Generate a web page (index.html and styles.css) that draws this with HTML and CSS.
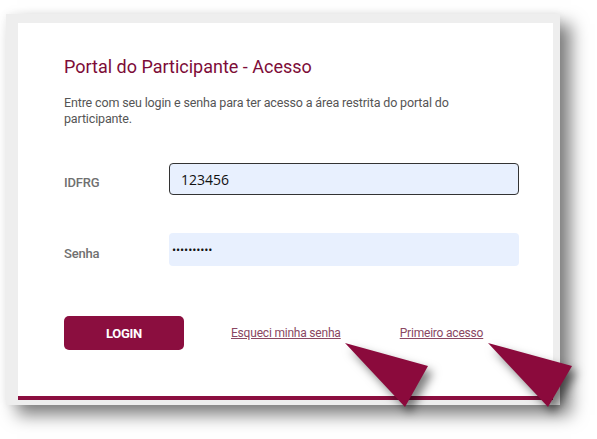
FILE: index.html
```html
<!DOCTYPE html>
<html>
<head lang="pt-BR">
    <meta charset="UTF-8">
    <title>Portal do Participante - Acesso</title>
    <link rel="stylesheet" href="styles.css">
</head>
<body>
<div id="frame">
    <div id="panel">
        <h1 class="title">Portal do Participante - Acesso</h1>
        <p class="intro">Entre com seu login e senha para ter acesso a área restrita do portal do participante.</p>
        <form class="login-form">
            <div class="row">
                <label class="label" for="idfrg">IDFRG</label>
                <input class="field focused" id="idfrg" type="text" value="123456">
            </div>
            <div class="row">
                <label class="label" for="senha">Senha</label>
                <input class="field secret" id="senha" type="password" value="1234567890">
            </div>
            <div class="actions">
                <button class="btn" type="button">LOGIN</button>
                <a class="link link-forgot" href="#">Esqueci minha senha</a>
                <a class="link" href="#">Primeiro acesso</a>
            </div>
        </form>
    </div>
</div>
<svg class="pointers" width="597" height="439" viewBox="0 0 597 439">
    <polygon points="345,343 428,366 405,407"/>
    <polygon points="488,343 572,366 548,407"/>
</svg>
</body>
</html>
```

FILE: styles.css
```css
*{
    margin: 0;
    padding: 0;
    box-sizing: border-box;
}
body{
    background: #fff;
    font-family: Roboto, "Liberation Sans", sans-serif;
    width: 597px;
    height: 439px;
    overflow: hidden;
}
#frame{
    width: 554px;
    margin: 14px 0 0 6px;
    padding: 9px 7px 5px 12px;
    background: #eeeeee;
    box-shadow: 11px 10px 16px rgba(0,0,0,0.5), 0 0 8px rgba(0,0,0,0.06);
}
#panel{
    background: #fff;
    padding: 32px 34px 46px 46px;
    border-bottom: 4px solid #8b0e3f;
}
.title{
    font-size: 18px;
    font-weight: 400;
    line-height: 24px;
    color: #7d0c38;
}
.intro{
    margin-top: 16px;
    font-size: 12.5px;
    line-height: 16px;
    color: #555;
    letter-spacing: -0.15px;
    width: 420px;
}
.login-form{
    margin-top: 36px;
}
.row{
    display: flex;
    align-items: center;
    margin-bottom: 38px;
}
.label{
    width: 105px;
    padding-top: 7px;
    font-size: 13px;
    font-weight: 500;
    color: #707070;
    letter-spacing: -0.2px;
}
.field{
    width: 350px;
    height: 33px;
    border: none;
    border-radius: 4px;
    background: #e8f0fe;
    padding: 0 3px;
    font-family: "Open Sans", sans-serif;
    font-size: 14px;
    color: #111;
    outline: none;
}
.field.focused{
    height: 32px;
    border: 1.5px solid #333;
    padding: 0 11px;
}
.field.secret{
    font-size: 11px;
    letter-spacing: -0.1px;
}
.actions{
    display: flex;
    align-items: center;
    margin-top: 50px;
}
.btn{
    width: 120px;
    height: 34px;
    border: none;
    border-radius: 5px;
    background: #8b0e3f;
    color: #fff;
    font-family: Roboto, sans-serif;
    font-weight: 700;
    font-size: 13px;
    letter-spacing: -0.3px;
    cursor: pointer;
}
.link{
    font-size: 12px;
    color: #8a4762;
    letter-spacing: -0.2px;
}
.link-forgot{
    margin-left: 47px;
    margin-right: 59px;
}
.pointers{
    position: absolute;
    left: 0;
    top: 0;
    pointer-events: none;
    filter: drop-shadow(5px 6px 5px rgba(0,0,0,0.5));
}
.pointers polygon{
    fill: #8b0a3c;
}
```
